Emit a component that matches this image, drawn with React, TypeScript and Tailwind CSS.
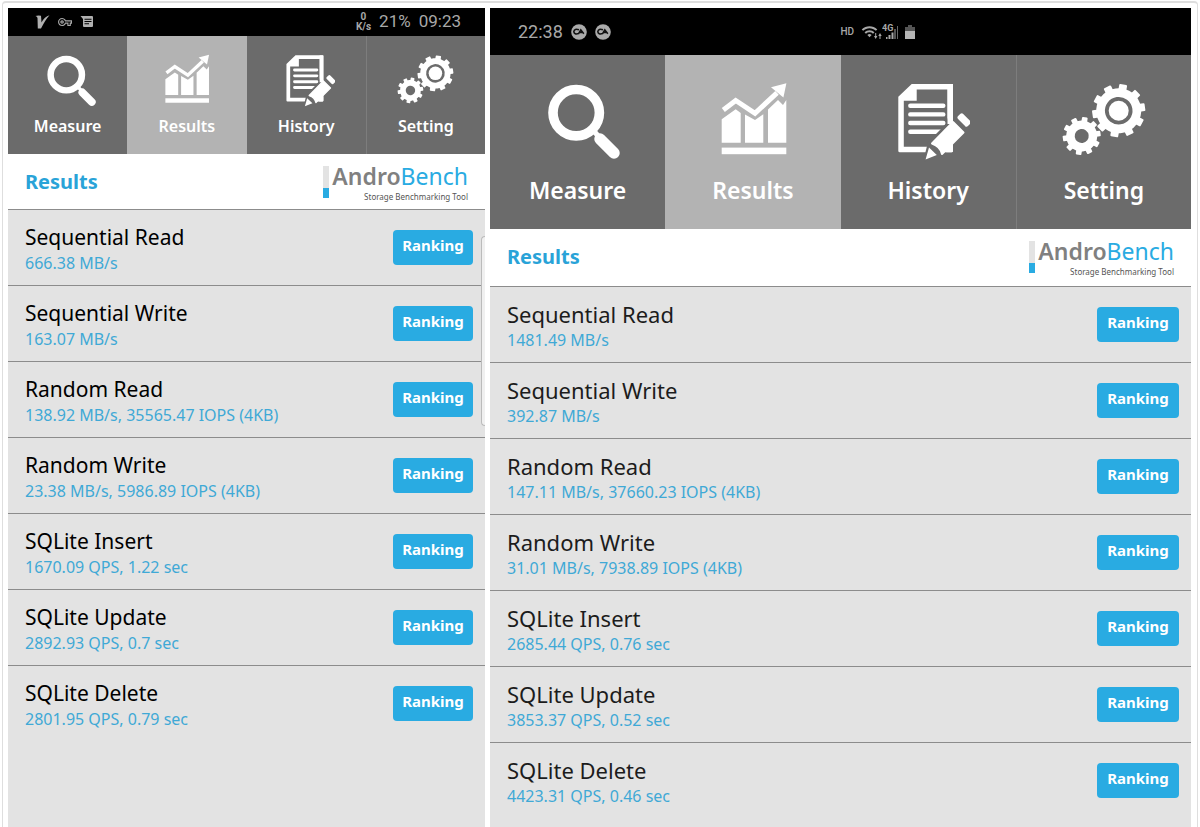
import type { ReactNode } from 'react'
import clsx from 'clsx'
import { MdOutlineVpnKey, MdWifi } from 'react-icons/md'

type TabName = 'Measure' | 'Results' | 'History' | 'Setting'

interface Result {
  name: string
  value: string
}

const LEFT_RESULTS: Result[] = [
  { name: 'Sequential Read', value: '666.38 MB/s' },
  { name: 'Sequential Write', value: '163.07 MB/s' },
  { name: 'Random Read', value: '138.92 MB/s, 35565.47 IOPS (4KB)' },
  { name: 'Random Write', value: '23.38 MB/s, 5986.89 IOPS (4KB)' },
  { name: 'SQLite Insert', value: '1670.09 QPS, 1.22 sec' },
  { name: 'SQLite Update', value: '2892.93 QPS, 0.7 sec' },
  { name: 'SQLite Delete', value: '2801.95 QPS, 0.79 sec' },
]

const RIGHT_RESULTS: Result[] = [
  { name: 'Sequential Read', value: '1481.49 MB/s' },
  { name: 'Sequential Write', value: '392.87 MB/s' },
  { name: 'Random Read', value: '147.11 MB/s, 37660.23 IOPS (4KB)' },
  { name: 'Random Write', value: '31.01 MB/s, 7938.89 IOPS (4KB)' },
  { name: 'SQLite Insert', value: '2685.44 QPS, 0.76 sec' },
  { name: 'SQLite Update', value: '3853.37 QPS, 0.52 sec' },
  { name: 'SQLite Delete', value: '4423.31 QPS, 0.46 sec' },
]

const TABS: TabName[] = ['Measure', 'Results', 'History', 'Setting']

// ---------------------------------------------------------------------------
// Tab icons, all drawn on the same 84x80 canvas
// ---------------------------------------------------------------------------

function MeasureIcon() {
  return (
    <g fill="none" stroke="#fff" strokeLinecap="round">
      <circle cx="40.2" cy="30.7" r="23.2" strokeWidth="9.6" />
      <path d="M57 48l6 7" strokeWidth="5" />
      <path d="M64 57l14 14" strokeWidth="11.5" />
    </g>
  )
}

function ResultsIcon() {
  return (
    <g fill="#fff">
      <path d="M10.7 60.7V37.3l14-10 5 3.6v29.8zM34 60.7V32.5l10 5.5 8.3-5.8v28.5zM57 60.7V27.6L67 18l5 5 3.3-5v42.7z" />
      <rect x="10.7" y="65.6" width="64.6" height="6.6" />
      <path
        d="M12.3 28l12.4-9.5L44 31.3 66 10.8"
        fill="none"
        stroke="#b3b3b3"
        strokeWidth="9"
      />
      <path d="M12.3 28l12.4-9.5L44 31.3 66 10.8" fill="none" stroke="#fff" strokeWidth="5" />
      <path d="M60 5.3L75.4 1.2l-3 14.2z" />
    </g>
  )
}

function HistoryIcon() {
  return (
    <g>
      <path
        fill="#fff"
        fillRule="evenodd"
        d="M25.7 2H65.5q1.5 0 1.5 1.5V68.8q0 1.5-1.5 1.5H13.8q-1.5 0-1.5-1.5V14.7zM30.7 7.5V18.7H17.8V64.8H61.5V7.5z"
      />
      <path
        d="M24.3 23.7h33M24.3 32.4h33M24.3 41h33M24.3 49.7h31"
        stroke="#fff"
        strokeWidth="4.4"
        strokeLinecap="round"
      />
      <path d="M37 80L42 60 60 42 61.5 36 75 54 56 75z" fill="#6b6b6b" />
      <path d="M61.500 2H67V42H61.500z" fill="#fff" />
      <path d="M67 50.5V69q0 1.300-1.500 1.300H57l-3-3z" fill="#fff" />
      <path
        d="M46 61.5l21-21.5 10.5 10.5-21.5 21.5q-1.500-7.500-10-10.500z"
        fill="#fff"
        stroke="#fff"
        strokeWidth="2"
        strokeLinejoin="round"
      />
      <path d="M39.6 77.5l3.4-12 7.8 7.6z" fill="#fff" />
      <path
        d="M73.500 35.500l2.300-2.200 7 7-2.300 2.400z"
        fill="#fff"
        stroke="#fff"
        strokeWidth="4"
        strokeLinejoin="round"
      />
    </g>
  )
}

interface GearProps {
  cx: number
  cy: number
  outer: number
  body: number
  inner: number
}

function Gear({ cx, cy, outer, body, inner }: GearProps) {
  const half = outer * 0.15
  return (
    <g transform={`translate(${cx} ${cy}) rotate(-8)`}>
      {Array.from({ length: 10 }, (_, i) => (
        <rect
          key={i}
          x={inner + 3}
          y={-half}
          width={outer - inner - 3}
          height={half * 2}
          rx="1"
          fill="#fff"
          transform={`rotate(${i * 36})`}
        />
      ))}
      <circle r={(body + inner) / 2} fill="none" stroke="#fff" strokeWidth={body - inner} />
    </g>
  )
}

function SettingIcon() {
  return (
    <g>
      <Gear cx={56.7} cy={28.7} outer={26.5} body={22.5} inner={13.8} />
      <circle cx="56.7" cy="28.7" r="10" fill="#fff" />
      <Gear cx={19.7} cy={54} outer={19} body={15.5} inner={7} />
    </g>
  )
}

const TAB_ICONS: Record<TabName, ReactNode> = {
  Measure: <MeasureIcon />,
  Results: <ResultsIcon />,
  History: <HistoryIcon />,
  Setting: <SettingIcon />,
}

// ---------------------------------------------------------------------------
// Status bars
// ---------------------------------------------------------------------------

function LeftStatus() {
  return (
    <div className="flex h-7 items-center justify-between bg-black pr-6 pl-[27px] font-['Roboto',sans-serif] text-[#a8a8a8]">
      <div className="flex items-center gap-2">
        <svg className="h-3.5 w-[15px]" viewBox="0 0 15 14" fill="#b0b0b0">
          <path d="M0.5 1Q3 0 6 0.800L6.500 7.500Q9.500 1.500 14.500 0.200Q10.500 4.500 6 13.500H2.800L2.500 3Q2.200 1.500 0.500 1z" />
        </svg>
        <MdOutlineVpnKey className="h-4 w-3.5" />
        <svg className="h-3.5 w-3.5" viewBox="0 0 14 14">
          <path d="M0.5 1H12q1 0 1 1v9q0 1-1 1H4q-1 0-1-1V4z" fill="#b0b0b0" />
          <path d="M4.500 4.200h7M4.500 6.500h7M4.500 8.800h4.500" stroke="#000" strokeWidth="1.100" />
        </svg>
      </div>
      <div className="flex items-center gap-2">
        <div className="text-center text-[10px] font-bold leading-[10px]">
          0<br />K/s
        </div>
        <span className="text-[17px]">21%</span>
        <span className="text-[17px]">09:23</span>
      </div>
    </div>
  )
}

function CaBadge() {
  return (
    <svg className="size-4" viewBox="0 0 16 16">
      <circle cx="8" cy="8" r="7.8" fill="#aaa" />
      <path
        d="M8 5.800Q3.500 4.200 2.800 7.600Q3.300 11 7.600 9.600L9.800 6L12.800 9.800M8.500 8.500h2.500"
        fill="none"
        stroke="#111"
        strokeWidth="1.600"
      />
    </svg>
  )
}

function RightStatus() {
  return (
    <div className="grid h-[47px] grid-cols-2 items-center bg-black font-['Roboto',sans-serif] text-[#a8a8a8]">
      <div className="flex items-center gap-2 pl-7">
        <span className="text-[18px]">22:38</span>
        <CaBadge />
        <CaBadge />
      </div>
      <div className="flex items-center">
        <span className="w-5 text-[10px] font-medium">HD</span>
        <MdWifi className="size-[17px]" />
        <svg className="-ml-1 h-2 w-2 self-end" viewBox="0 0 8 8" fill="#a8a8a8">
          <path d="M0 4h1.200V1h1v3h1.200L1.700 7zM4.300 4h1.200v3h1V4h1.200L6 1z" />
        </svg>
        <svg className="h-4 w-4" viewBox="0 0 16 16" fill="#a8a8a8">
          <text x="0" y="7" fontSize="9" fontWeight="700">4G</text>
          <path d="M4 13h1.500v2H4zM6.500 11h2v4h-2zM9.500 8.500h2V15h-2zM12.500 5h1v10h-1z" />
          <path d="M15 2h1v13h-1z" fill="#666" />
        </svg>
        <svg className="ml-1.5 h-4 w-3" viewBox="0 0 12 16">
          <path d="M4 1h4v2h3v4H1V3h3z" fill="#555" />
          <path d="M1 7h10v8H1z" fill="#b5b5b5" />
        </svg>
      </div>
    </div>
  )
}

// ---------------------------------------------------------------------------
// App pieces
// ---------------------------------------------------------------------------

function TabBar({ large }: { large?: boolean }) {
  return (
    <nav className={clsx('grid grid-cols-4 bg-[#6b6b6b]', large ? 'h-[174px]' : 'h-[118px]')}>
      {TABS.map((tab) => (
        <button
          key={tab}
          type="button"
          className={clsx(
            'flex flex-col items-center font-semibold text-white',
            large ? 'gap-3 pt-[27px] text-[23px] leading-8' : 'gap-1.5 pt-[18px] text-base',
            tab === 'Results' && 'bg-[#b3b3b3]',
            tab === 'Setting' && 'border-l border-[#7d7d7d]',
          )}
        >
          <svg className={large ? 'h-20 w-[84px]' : 'h-[54px] w-[57px]'} viewBox="0 0 84 80">
            {TAB_ICONS[tab]}
          </svg>
          {tab}
        </button>
      ))}
    </nav>
  )
}

function Logo() {
  return (
    <div className="flex gap-[3px]">
      <div className="mt-0.5 flex h-8 w-1.5 flex-col bg-[#e3e3e3]">
        <div className="mt-auto h-2.5 bg-[#29abe2]" />
      </div>
      <div className="flex flex-col items-end">
        <div className="text-[23px] leading-6 text-[#29abe2]">
          <span className="font-semibold text-[#808080]">Andro</span>Bench
        </div>
        <div className="mt-1 text-[8px] leading-[10px] text-[#555]">Storage Benchmarking Tool</div>
      </div>
    </div>
  )
}

function ResultRow({ name, value, large }: Result & { large?: boolean }) {
  return (
    <li className="flex h-[76px] items-start justify-between border-t border-[#8c8c8c] pr-3 pl-[17px]">
      <div className="pt-3">
        <div
          className={clsx(
            'leading-[30px]',
            large ? 'text-[22px] text-[#1c1c1c]' : 'text-[21px] text-black',
          )}
        >
          {name}
        </div>
        <div className="text-base leading-[22px] text-[#3fa9d6]">{value}</div>
      </div>
      <button
        type="button"
        className={clsx(
          'mt-5 h-[35px] rounded bg-[#29abe2] pb-1 text-[15px] font-bold text-white',
          large ? 'w-[82px]' : 'w-20',
        )}
      >
        Ranking
      </button>
    </li>
  )
}

interface PhoneProps {
  status: ReactNode
  results: Result[]
  large?: boolean
  children?: ReactNode
}

function Phone({ status, results, large, children }: PhoneProps) {
  return (
    <section className="relative flex flex-col bg-[#e3e3e3]">
      {status}
      <TabBar large={large} />
      <header
        className={clsx(
          'flex items-start justify-between bg-white px-[17px]',
          large ? 'h-[57px] pt-2.5' : 'h-[55px] pt-2.5',
        )}
      >
        <h1 className="text-[20px] font-bold leading-9 text-[#29a3d8]">Results</h1>
        <Logo />
      </header>
      <ul>
        {results.map((r) => (
          <ResultRow key={r.name} {...r} large={large} />
        ))}
      </ul>
      {children}
    </section>
  )
}

export default function App() {
  return (
    <div className="flex min-h-screen bg-white px-0.5 pt-px font-['Noto_Sans',sans-serif]">
      <div className="grid flex-1 grid-cols-[477fr_701fr] gap-[5px] rounded-t border-x border-t-2 border-[#dedede] pt-[5px] pr-1.5 pl-[5px]">
        <Phone status={<LeftStatus />} results={LEFT_RESULTS}>
          {/* edge panel handle */}
          <div className="absolute top-[228px] right-0 h-[190px] w-1 rounded-l border-y border-l border-[#bbb] bg-[#f0f0f0]" />
        </Phone>
        <Phone status={<RightStatus />} results={RIGHT_RESULTS} large />
      </div>
    </div>
  )
}
